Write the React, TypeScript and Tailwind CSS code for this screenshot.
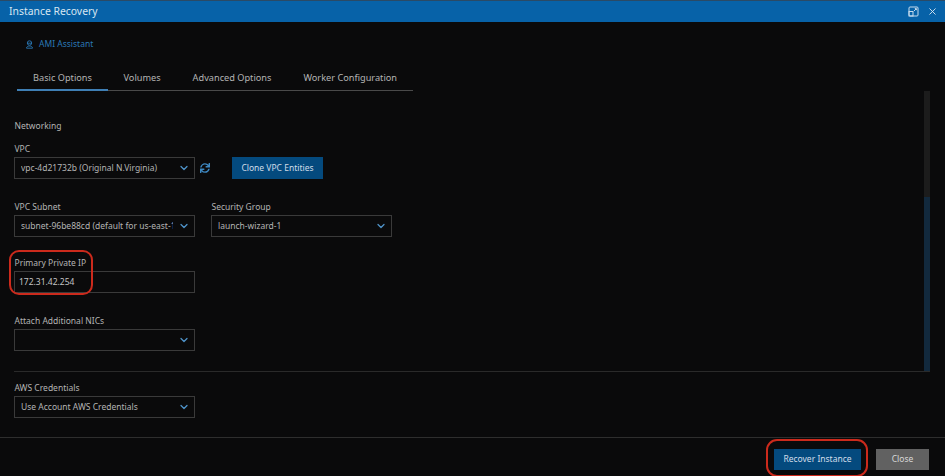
import { ChevronDown, X } from "lucide-react";
import { FaSync } from "react-icons/fa";

function Select({ value }: { value: string }) {
  return (
    <div className="w-[181px] h-[22px] border border-[#3a3a3a] flex items-center pl-[6px] pr-[4px] text-[8.5px] text-[#b4b4b4]">
      <span className="flex-1 overflow-hidden whitespace-nowrap">{value}</span>
      <ChevronDown className="w-[12px] h-[12px] ml-[5px] text-[#4f93c9] shrink-0" strokeWidth={2.5} />
    </div>
  );
}

function Label({ children }: { children: string }) {
  return <div className="text-[8.5px] leading-[12px] text-[#b4b4b4] mb-[2px] pl-[0.5px]">{children}</div>;
}

export default function App() {
  return (
    <div
      className="relative w-[945px] h-[476px] bg-[#0a0a0b] flex flex-col overflow-hidden"
      style={{ fontFamily: '"Noto Sans", "Open Sans", sans-serif' }}
    >
      <div className="h-[22px] bg-[#0762a8] flex items-center pl-[9px] pr-[7px] shrink-0 border-t border-[#2a4a66]">
        <span className="text-[10.4px] text-[#d8e6f2] flex-1">Instance Recovery</span>
        <svg width="11" height="11" viewBox="0 0 11 11" fill="none" stroke="#c7dcee" strokeWidth="1" className="mr-[8px]">
          <rect x="1" y="1" width="9" height="9" rx="1" />
          <rect x="1" y="5.5" width="4" height="4.5" />
          <path d="M6 5 L8.2 2.8 M6.8 2.6 H8.4 V4.2" />
        </svg>
        <X className="w-[11px] h-[11px] text-[#d8e6f2]" strokeWidth={2} />
      </div>

      <div className="flex-1 flex min-h-0">
        <div className="flex-1 pl-[14px] flex flex-col min-w-0">
          <div className="flex items-center gap-[5px] pl-[11px] mt-[16px] h-[12px] text-[8.5px] text-[#2a78b5]">
            <svg width="9" height="9" viewBox="0 0 9 9" fill="none" stroke="#2a78b5" strokeWidth="0.9">
              <circle cx="4.5" cy="3" r="2.2" />
              <path d="M2 3.2 H7 M1.5 8.2 C1.5 6.6 3 6 4.5 6 C6 6 7.5 6.6 7.5 8.2 Z" />
            </svg>
            AMI Assistant
          </div>

          <div className="flex mt-[20px] w-[396px] ml-[3px] h-[21px] border-b border-[#4a4a4a] text-[9.2px] text-[#b4b4b4]">
            <div className="w-[91px] h-[21px] border-b-[2px] border-[#3f7fb5] flex justify-center pt-[1px]">Basic Options</div>
            <div className="ml-[15.5px] pt-[1px]">Volumes</div>
            <div className="ml-[32px] pt-[1px]">Advanced Options</div>
            <div className="ml-[32px] pt-[1px]">Worker Configuration</div>
          </div>

          <div className="mt-[29px] text-[8.5px] leading-[12px] text-[#b4b4b4] pl-[0.5px]">Networking</div>

          <div className="mt-[11px]">
            <Label>VPC</Label>
            <div className="flex items-center">
              <Select value="vpc-4d21732b (Original N.Virginia)" />
              <FaSync className="w-[10px] h-[10px] ml-[5px] text-[#3d87c0]" />
              <div className="ml-[22px] w-[91px] h-[22px] bg-[#044a7e] flex items-center justify-center text-[8.5px] text-[#cfdce8]">
                Clone VPC Entities
              </div>
            </div>
          </div>

          <div className="flex mt-[22px] gap-[16px]">
            <div>
              <Label>VPC Subnet</Label>
              <Select value="subnet-96be88cd (default for us-east-1" />
            </div>
            <div>
              <Label>Security Group</Label>
              <Select value="launch-wizard-1" />
            </div>
          </div>

          <div className="mt-[20px]">
            <Label>Primary Private IP</Label>
            <div className="w-[181px] h-[22px] border border-[#3a3a3a] flex items-center pl-[4px] text-[8.5px] text-[#c4c4c4]">
              172.31.42.254
            </div>
          </div>

          <div className="mt-[22px]">
            <Label>Attach Additional NICs</Label>
            <Select value="" />
          </div>

          <div className="mt-[20px] h-px bg-[#2a2a2a] w-[916px]" />

          <div className="mt-[10px]">
            <Label>AWS Credentials</Label>
            <Select value="Use Account AWS Credentials" />
          </div>
        </div>
        <div className="w-[21px] shrink-0 pt-[69px]">
          <div className="w-[6px] h-[106px] bg-[#1c1c1c]" />
          <div className="w-[6px] h-[174px] bg-[#12293d]" />
        </div>
      </div>

      <div className="h-[39px] border-t border-[#2e2e2e] flex items-start justify-end pt-[11px] pr-[16px] gap-[15px] shrink-0">
        <div className="w-[87px] h-[21px] bg-[#044a7e] flex items-center justify-center text-[8.5px] text-[#d3deea]">
          Recover Instance
        </div>
        <div className="w-[53px] h-[21px] bg-[#616161] flex items-center justify-center text-[8.5px] text-[#d8d8d8]">
          Close
        </div>
      </div>

      <div className="absolute left-[9px] top-[250px] w-[84px] h-[45px] rounded-[10px] border-2 border-[#cc2a1c] pointer-events-none" />
      <div className="absolute left-[766px] top-[439px] w-[102px] h-[38px] rounded-[11px] border-2 border-[#cc2a1c] pointer-events-none" />
    </div>
  );
}
